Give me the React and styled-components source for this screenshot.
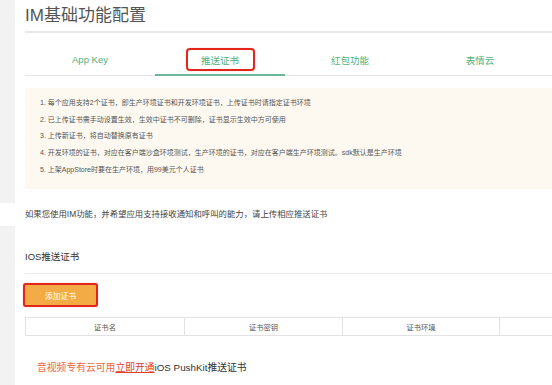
import React from 'react';
import styled, { createGlobalStyle } from 'styled-components';

const GlobalStyle = createGlobalStyle`
  html, body {
    margin: 0;
    padding: 0;
    background: #fff;
  }
  body {
    font-family: "Liberation Sans", "Noto Sans CJK SC", sans-serif;
    color: #444;
  }
`;

const Page = styled.div`
  width: 552px;
  height: 385px;
  overflow: hidden;
  display: flex;
  flex-direction: column;
`;

const Section = styled.section`
  border-left: 15px solid ${(p) => (p.$gutter ? '#f2f2f2' : '#fff')};
  padding-left: 10px;
  height: ${(p) => p.$height}px;
  box-sizing: border-box;
  display: flex;
  flex-direction: column;
  flex-shrink: 0;
`;

const Title = styled.h1`
  margin: 0;
  padding: 6px 0 5px;
  font-size: 17px;
  font-weight: normal;
  color: #555;
  line-height: 20px;
  border-bottom: 2px solid #e6e6e6;
`;

const Tabs = styled.div`
  display: flex;
  height: 43px;
  box-sizing: border-box;
  border-bottom: 1px solid #e3e3e3;
`;

const Tab = styled.div`
  width: 130px;
  height: 43px;
  padding-top: 12px;
  display: flex;
  align-items: center;
  justify-content: center;
  font-size: 9.5px;
  color: #4fb17b;
  box-sizing: border-box;
  border-bottom: 2px solid ${(p) => (p.$active ? '#6bb79a' : 'transparent')};
  margin-bottom: -1px;
`;

const Marked = styled.span`
  display: inline-flex;
  align-items: center;
  justify-content: center;
  width: 69px;
  height: 23px;
  border: 2px solid #e3261c;
  border-radius: 4px;
  box-sizing: border-box;
  box-shadow: 0 0 1px rgba(227, 38, 28, 0.5);
`;

const Notice = styled.ol`
  list-style: none;
  margin: 12px -10px 0 0;
  padding: 7px 0 10px 15px;
  background: #fdf9f0;
  display: flex;
  flex-direction: column;
`;

const NoticeItem = styled.li`
  font-size: 7px;
  line-height: 16.7px;
  color: #555;
  white-space: nowrap;
`;

const Hint = styled.p`
  margin: 0;
  font-size: 8.4px;
  line-height: 23px;
  color: #444;
  white-space: nowrap;
`;

const SubTitle = styled.h2`
  margin: 0;
  padding-top: 25px;
  height: 48px;
  box-sizing: border-box;
  font-size: 9.5px;
  line-height: 12px;
  font-weight: normal;
  color: #333;
  border-bottom: 1px solid #ececec;
`;

const AddButton = styled.button`
  margin: 9px 0 0 -2px;
  width: 75px;
  height: 24px;
  background: #f3ac45;
  color: #fff;
  font-family: inherit;
  font-size: 7.8px;
  border: 2px solid #e3261c;
  border-radius: 3px;
  padding: 0;
  box-shadow: 0 0 1px rgba(227, 38, 28, 0.6);
`;

const Table = styled.div`
  margin-top: 10px;
  display: grid;
  grid-template-columns: 158px 158px 157px 157px;
  width: 632px;
  border: 1px solid #e2e2e2;
  box-sizing: border-box;
`;

const HeadCell = styled.div`
  height: 17px;
  display: flex;
  align-items: center;
  justify-content: center;
  font-size: 7.3px;
  color: #555;
  border-left: ${(p) => (p.$first ? 'none' : '1px solid #e2e2e2')};
`;

const Footer = styled.p`
  margin: 26px 0 0 12px;
  font-size: 9.8px;
  line-height: 12px;
  color: #333;
  white-space: nowrap;
`;

const Orange = styled.span`
  color: #f0683d;
`;

const OpenLink = styled.a`
  color: #e23b2b;
  text-decoration: underline;
`;

const notices = [
  '1. 每个应用支持2个证书，即生产环境证书和开发环境证书，上传证书时请指定证书环境',
  '2. 已上传证书需手动设置生效，生效中证书不可删除，证书显示生效中方可使用',
  '3. 上传新证书，将自动替换原有证书',
  '4. 开发环境的证书，对应在客户端沙盒环境测试，生产环境的证书，对应在客户端生产环境测试。sdk默认是生产环境',
  '5. 上架AppStore时要在生产环境，用99美元个人证书',
];

const tabs = ['App Key', '推送证书', '红包功能', '表情云'];

export default function App() {
  return (
    <Page>
      <GlobalStyle />
      <Section $gutter $height={203}>
        <Title>IM基础功能配置</Title>
        <Tabs>
          {tabs.map((t, i) => (
            <Tab key={t} $active={i === 1}>
              {i === 1 ? <Marked>{t}</Marked> : t}
            </Tab>
          ))}
        </Tabs>
        <Notice>
          {notices.map((n) => (
            <NoticeItem key={n}>{n}</NoticeItem>
          ))}
        </Notice>
      </Section>
      <Section $height={23}>
        <Hint>如果您使用IM功能，并希望应用支持接收通知和呼叫的能力，请上传相应推送证书</Hint>
      </Section>
      <Section $gutter $height={159}>
        <SubTitle>IOS推送证书</SubTitle>
        <div>
          <AddButton>添加证书</AddButton>
        </div>
        <Table>
          <HeadCell $first>证书名</HeadCell>
          <HeadCell>证书密钥</HeadCell>
          <HeadCell>证书环境</HeadCell>
          <HeadCell></HeadCell>
        </Table>
        <Footer>
          <Orange>音视频专有云可用</Orange>
          <OpenLink>立即开通</OpenLink>iOS PushKit推送证书
        </Footer>
      </Section>
    </Page>
  );
}
